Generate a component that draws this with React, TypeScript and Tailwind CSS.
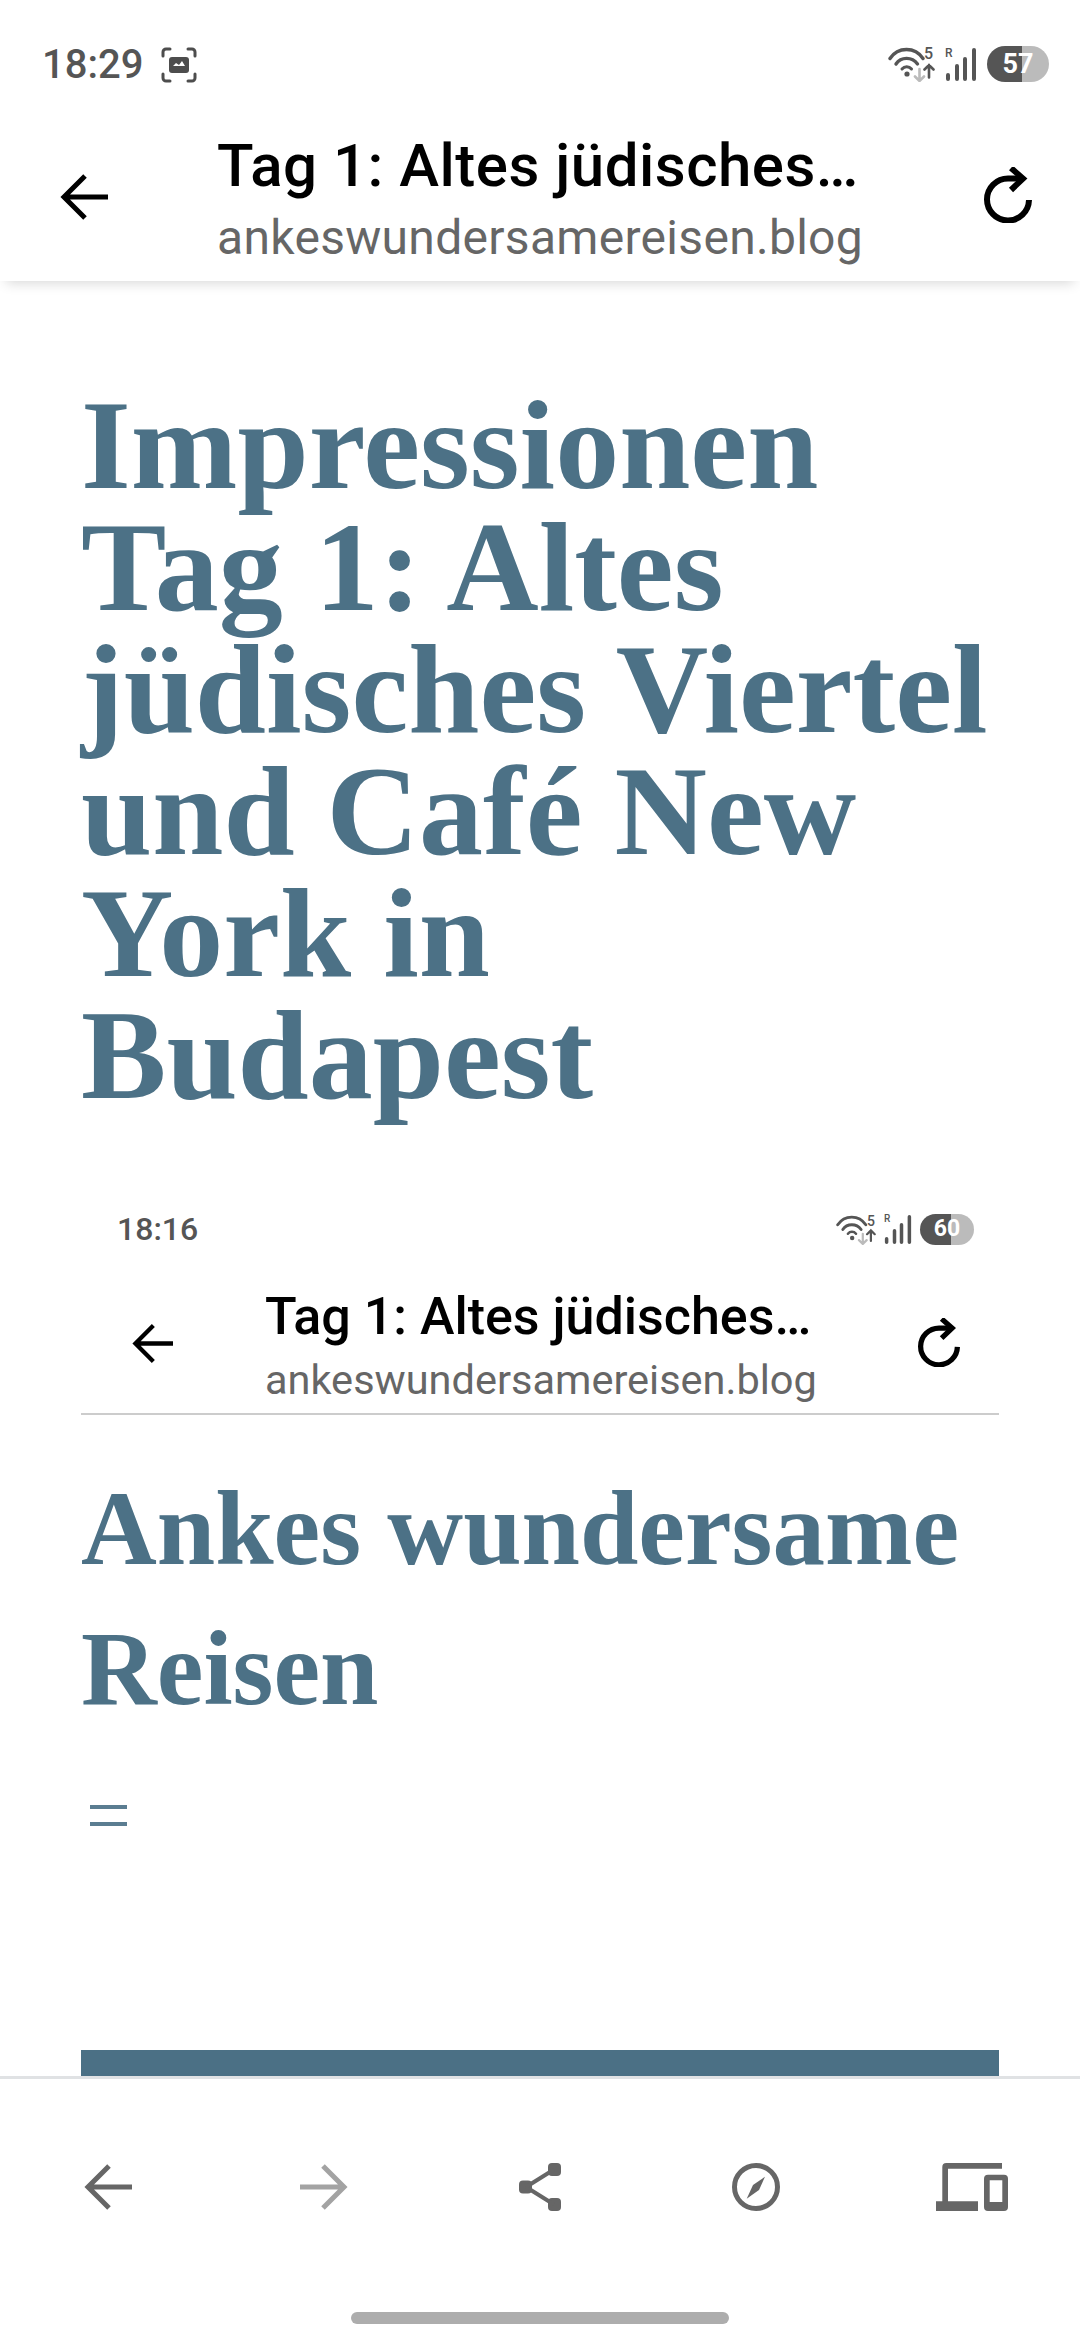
const sans = '[font-family:Roboto,"Noto_Sans",sans-serif]'
const serif = "[font-family:'Liberation_Serif',serif]"

function ArrowLeft({ className }: { className?: string }) {
  return (
    <svg viewBox="0 0 48 48" className={className} fill="none" stroke="currentColor" strokeWidth="5">
      <path d="M48 24H5M25 3 4 24 25 45" />
    </svg>
  )
}

function ArrowRight({ className }: { className?: string }) {
  return (
    <svg viewBox="0 0 48 48" className={className} fill="none" stroke="currentColor" strokeWidth="5">
      <path d="M0 24h43M23 3 44 24 23 45" />
    </svg>
  )
}

function Reload({ className }: { className?: string }) {
  return (
    <svg viewBox="0 0 48 56" className={className} fill="none" stroke="currentColor" strokeWidth="6">
      <path d="M45 33A21 21 0 1 1 24 11.500H38" />
      <path d="M27 1 39 11.500 27 23" />
    </svg>
  )
}

function Share({ className }: { className?: string }) {
  return (
    <svg viewBox="0 0 42 48" className={className} fill="#666">
      <rect x="0" y="17.500" width="13" height="13" rx="4" />
      <rect x="29" y="0" width="13" height="13" rx="4" />
      <rect x="29" y="35" width="13" height="13" rx="4" />
      <path d="M7 24 35 6.500M7 24l28 17.500" stroke="#666" strokeWidth="4" />
    </svg>
  )
}

function Compass({ className }: { className?: string }) {
  return (
    <svg viewBox="0 0 48 48" className={className} fill="none">
      <circle cx="24" cy="24" r="21.500" stroke="#666" strokeWidth="5" />
      <path d="M33 13.700 27 27 14.700 35.700 21 22z" fill="#666" />
    </svg>
  )
}

function Devices({ className }: { className?: string }) {
  return (
    <svg viewBox="0 0 72 48" className={className} fill="#666">
      <path d="M6.300 4a4 4 0 0 1 4-4H66v5.700H12v32.600h30V48H0v-9.700h6.300z" />
      <path fillRule="evenodd" d="M52 11.700h16a4 4 0 0 1 4 4V44a4 4 0 0 1-4 4H52a4 4 0 0 1-4-4V15.700a4 4 0 0 1 4-4zm1.700 5.600V39h12.600V17.300z" />
    </svg>
  )
}

function Wifi5g({ className }: { className?: string }) {
  return (
    <svg viewBox="0 0 47 36" className={className} fill="none" stroke="#555" strokeLinecap="round">
      <path d="M2 12.500C10 .5 27 .5 35 12.500" strokeWidth="3.400" />
      <path d="M8 18C13 10.500 24 10.500 29.500 18" strokeWidth="3.400" />
      <path d="M14 23c2.500-3 7-3 9.500 0" strokeWidth="3" />
      <circle cx="19" cy="28" r="2.600" fill="#555" stroke="none" />
      <path d="M31.500 23v12M27 30.500l4.500 4.500 4.500-4.500" stroke="#bbb" strokeWidth="2.600" />
      <path d="M41 31.500V19M36.500 23.500 41 19l4.500 4.500" strokeWidth="2.600" />
    </svg>
  )
}

function Signal({ className }: { className?: string }) {
  return (
    <svg viewBox="0 0 32 34" className={className} stroke="#555" strokeWidth="4" strokeLinecap="round">
      <path d="M3 32v-4M12 32V19M20 32V12M29 32V3" />
    </svg>
  )
}

function StatusIcons({ level, small }: { level: string; small?: boolean }) {
  return (
    <div className={`flex items-center ${small ? 'gap-[8px]' : 'gap-[10px]'}`}>
      <div className="relative">
        <Wifi5g className={small ? 'w-[40px] h-[31px]' : 'w-[47px] h-[36px]'} />
        <span
          className={`absolute ${sans} font-medium leading-none text-[#555] ${
            small ? 'left-[31px] top-0 text-[14px]' : 'left-[36px] top-0 text-[16px]'
          }`}
        >
          5
        </span>
      </div>
      <div className="relative">
        <Signal className={small ? 'w-[28px] h-[30px]' : 'w-[32px] h-[34px]'} />
        <span
          className={`absolute left-0 ${sans} font-medium leading-none text-[#555] ${
            small ? 'top-0 text-[10px]' : 'top-0 text-[12px]'
          }`}
        >
          R
        </span>
      </div>
      <div
        className={`flex items-center justify-center rounded-full ${sans} font-bold text-white bg-[linear-gradient(90deg,#555_57%,#bbb_57%)] ${
          small ? 'w-[54px] h-[31px] text-[23px]' : 'w-[62px] h-[36px] text-[27px]'
        }`}
      >
        {level}
      </div>
    </div>
  )
}

function TitleBlock({ small }: { small?: boolean }) {
  return (
    <div className={`flex-1 min-w-0 ${sans} whitespace-nowrap ${small ? '' : 'pt-[4px]'}`}>
      <div className={`font-medium text-black ${small ? 'text-[52px] leading-[62px]' : 'text-[60px] leading-[70px] tracking-[0.5px]'}`}>
        Tag 1: Altes jüdisches…
      </div>
      <div className={`text-[#666] ${small ? 'mt-[7px] text-[41.5px] leading-[50px]' : 'mt-[9px] text-[48px] leading-[56px] tracking-[0.3px]'}`}>
        ankeswundersamereisen.blog
      </div>
    </div>
  )
}

export default function App() {
  return (
    <div className="relative h-[2340px] w-[1080px] overflow-hidden bg-white flex flex-col">
      {/* Status bar */}
      <div className="h-[112px] shrink-0 flex items-start justify-between pl-[42px] pr-[31px] pt-[46px]">
        <div className="flex items-center gap-[18px]">
          <span className={`${sans} text-[40px] leading-[38px] font-medium text-[#555]`}>18:29</span>
          <svg viewBox="0 0 36 36" className="w-[36px] h-[36px]" fill="none" stroke="#4d4d4d" strokeWidth="3" strokeLinecap="round">
            <path d="M2 9V5a3 3 0 0 1 3-3h4M27 2h4a3 3 0 0 1 3 3v4M34 27v4a3 3 0 0 1-3 3h-4M9 34H5a3 3 0 0 1-3-3v-4" />
            <rect x="8" y="10" width="20" height="16" rx="3" fill="#4d4d4d" stroke="none" />
            <path d="M12 19l3-3 3 2 3-4 3 5z" fill="#fff" stroke="none" />
          </svg>
        </div>
        <StatusIcons level="57" />
      </div>

      {/* Toolbar */}
      <div className="relative z-10 h-[169px] shrink-0 flex items-center bg-white pl-[60px] pr-[48px] shadow-[0_8px_12px_-6px_rgba(0,0,0,0.16)]">
        <ArrowLeft className="w-[48px] h-[48px] text-black shrink-0 mr-[109px]" />
        <TitleBlock />
        <Reload className="w-[48px] h-[56px] text-black shrink-0 mb-[4px]" />
      </div>

      {/* Page */}
      <div className="flex-1 min-h-0 overflow-hidden px-[81px]">
        <h1 className={`mt-[103px] text-[128px] leading-[122px] font-bold whitespace-nowrap text-[#4c7186] ${serif}`}>
          Impressionen
          <br />
          Tag 1: Altes
          <br />
          jüdisches Viertel
          <br />
          und Café New
          <br />
          York in
          <br />
          Budapest
        </h1>

        {/* Embedded screenshot */}
        <div className="mt-[74px] border-b-2 border-[#ccc]">
          <div className="flex items-center justify-between pl-[36px] pr-[25px] h-[78px]">
            <span className={`${sans} text-[32px] font-medium text-[#555]`}>18:16</span>
            <StatusIcons level="60" small />
          </div>
          <div className="flex items-center pl-[50px] pr-[39px] pt-[18px] pb-[8px]">
            <ArrowLeft className="w-[43px] h-[41px] text-black shrink-0 mr-[91px] mb-[5px]" />
            <TitleBlock small />
            <Reload className="w-[42px] h-[49px] text-black shrink-0 mb-[6px]" />
          </div>
        </div>

        <div className={`mt-[44px] text-[105px] leading-[140px] font-bold text-[#4c7186] ${serif}`}>
          Ankes wundersame Reisen
        </div>
        <div className="mt-[66px] ml-[9px] w-[37px] flex flex-col gap-[13px]">
          <div className="h-[4px] bg-[#5b7d91]" />
          <div className="h-[4px] bg-[#5b7d91]" />
        </div>
        <div className="mt-[224px] h-[26px] bg-[#4b7085]" />
      </div>

      {/* Bottom bar */}
      <div className="relative z-10 h-[264px] shrink-0 bg-white border-t-[3px] border-[#e0e2e4]">
        <div className="grid grid-cols-5 justify-items-center items-center h-[216px]">
          <ArrowLeft className="w-[48px] h-[48px] text-[#666]" />
          <ArrowRight className="w-[48px] h-[48px] text-[#a3a3a3]" />
          <Share className="w-[42px] h-[48px]" />
          <Compass className="w-[48px] h-[48px]" />
          <Devices className="w-[72px] h-[48px]" />
        </div>
        <div className="mx-auto mt-[17px] h-[12px] w-[378px] rounded-full bg-[#adadad]" />
      </div>
    </div>
  )
}
